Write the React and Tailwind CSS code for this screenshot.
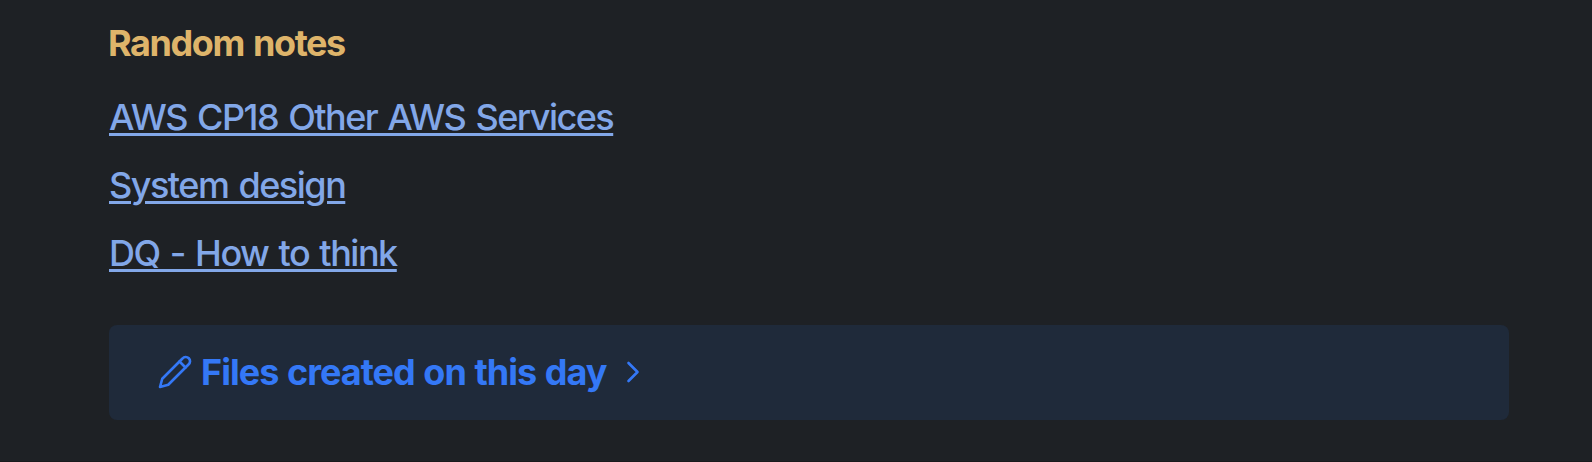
import { ChevronRight } from 'lucide-react';

const notes = [
  { title: 'AWS CP18 Other AWS Services', spacing: 'tracking-[-1.52px] [word-spacing:2px]' },
  { title: 'System design', spacing: 'tracking-[-1.5px] [word-spacing:2px]' },
  { title: 'DQ - How to think', spacing: 'tracking-[-1.48px] [word-spacing:2px]' },
];

function PencilIcon() {
  return (
    <svg width="36" height="36" viewBox="0 0 24 24" fill="none" stroke="currentColor" strokeWidth="1.75" strokeLinecap="round" strokeLinejoin="round" className="-mt-[2px] shrink-0">
      <path d="M17 3a2.85 2.83 0 1 1 4 4L7.5 20.5 2 22l1.5-5.5Z" />
      <path d="m15 5 4 4" />
    </svg>
  );
}

export default function App() {
  return (
    <main className="h-[462px] overflow-hidden border-b border-[#191a1c] bg-[#1e2125] pl-[109px] pr-[83px] pt-[15px] font-['Inter',sans-serif] text-[36px]">
      <h2 className="flex h-[54px] items-center font-bold text-[#deb46a]">
        <span className="-ml-[1px] mt-[1px] whitespace-nowrap tracking-[-1.42px] [word-spacing:2px]">Random notes</span>
      </h2>
      <ul className="mt-[14px]">
        {notes.map(({ title, spacing }) => (
          <li key={title} className="flex h-[68px] items-center">
            <a href="#" className={`whitespace-nowrap font-medium text-[#82a7e8] underline decoration-[3px] underline-offset-[3px] ${spacing}`}>{title}</a>
          </li>
        ))}
      </ul>
      <section className="mt-[38px] flex h-[95px] items-center rounded-[8px] bg-[#1f2a3a] pl-[48px] text-[#3478f6]">
        <PencilIcon />
        <span className="-mt-[2px] ml-[8px] w-[406px] whitespace-nowrap font-bold tracking-[-0.97px] [word-spacing:1px]">Files created on this day</span>
        <ChevronRight size={36} strokeWidth={1.75} className="-mt-[2px] ml-[8px]" />
      </section>
    </main>
  );
}
